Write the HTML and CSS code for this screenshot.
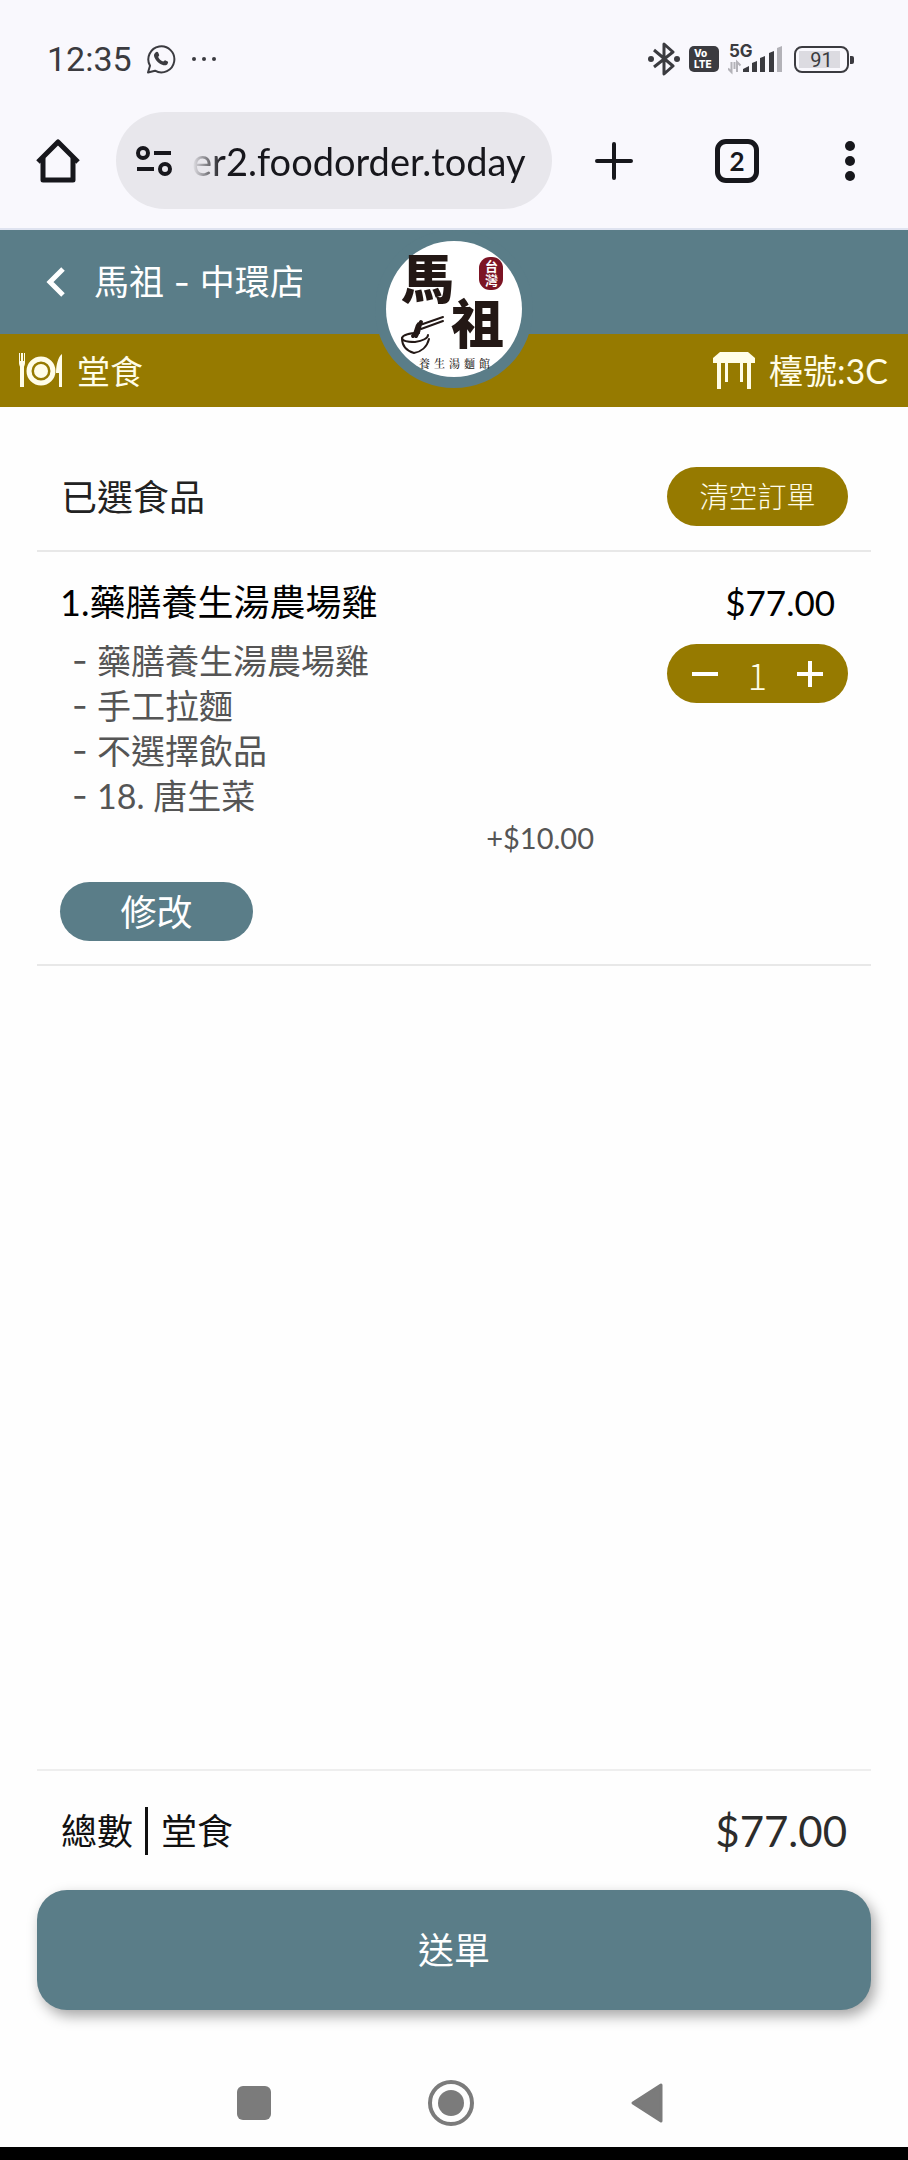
FILE: index.html
```html
<!DOCTYPE html>
<html lang="zh-Hant">
<head>
    <meta charset="UTF-8">
    <meta name="viewport" content="width=device-width, initial-scale=1.0">
    <title>馬祖 - 中環店</title>
    <link rel="stylesheet" href="styles.css">
</head>
<body>
    <div class="status-bar">
        <span class="clock">12:35</span>
        <svg class="icon-whatsapp" width="30" height="30" viewBox="0 0 30 30">
            <path d="M2 28.500l2-6.800A13 13 0 1 1 9 26.700z" fill="none" stroke="#3b3b40" stroke-width="2" stroke-linejoin="round"/>
            <path d="M9.500 8.500c1-1 2.300-.8 2.800.3l.9 2.200c.2.600-.9 1.500-1 2 .9 2 2.600 3.600 4.900 4.600.7 0 1.400-1.500 2-1.300l2.600 1.300c.8.500.3 2-.5 2.800-1.800 1.500-4.700 1-7.600-.9-2.300-1.500-4.200-3.700-5.200-6.200-.8-2-.3-3.700 1.100-4.800z" fill="#3b3b40"/>
        </svg>
        <svg class="icon-more" width="26" height="6" viewBox="0 0 26 6" fill="#3b3b40">
            <circle cx="3" cy="3" r="2"/><circle cx="13" cy="3" r="2"/><circle cx="23" cy="3" r="2"/>
        </svg>
        <div class="status-right">
            <svg width="32" height="34" viewBox="0 0 32 34" fill="none" stroke="#3b3b40" stroke-width="3">
                <path d="M6 8l19 16-9 8V2l9 8L6 25" stroke-linejoin="round"/>
                <circle cx="3" cy="17" r="3" fill="#3b3b40" stroke="none"/>
                <circle cx="29" cy="17" r="3" fill="#3b3b40" stroke="none"/>
            </svg>
            <span class="volte"><span>Vo</span><span>LTE</span></span>
            <svg class="signal" width="54" height="34" viewBox="0 0 54 34">
                <text x="1" y="15" class="signal-text">5G</text>
                <path d="M3.500 20v10L0 26.500M9 30V20l3.500 3.500M6.500 20v7" fill="none" stroke="#b3b2b8" stroke-width="2"/>
                <g fill="#3b3b40">
                    <path d="M15 30v-3l6-3v6zM24 30v-9l5-2v11zM32 30V16l5-2v16zM41 30V11l5-2v21z"/>
                </g>
                <path d="M49 30V6l5-2v26z" fill="#b3b2b8"/>
            </svg>
            <span class="battery">91</span>
        </div>
    </div>

    <div class="browser-bar">
        <button class="browser-btn" aria-label="Home">
            <svg width="44" height="46" viewBox="0 0 44 46" fill="none" stroke="#17171c" stroke-width="5" stroke-linejoin="round">
                <path d="M2 24L22 4l20 20"/>
                <path d="M7 20v22h30V20"/>
            </svg>
        </button>
        <div class="address">
            <svg width="36" height="32" viewBox="0 0 36 32" fill="none" stroke="#17171c" stroke-width="4">
                <circle cx="7" cy="8" r="5"/><path d="M18 8h17"/>
                <circle cx="29" cy="24" r="5"/><path d="M1 24h17"/>
            </svg>
            <span class="url">er2.foodorder.today</span>
        </div>
        <div class="browser-actions">
            <button class="browser-btn" aria-label="New tab">
                <svg width="38" height="38" viewBox="0 0 38 38" stroke="#17171c" stroke-width="4" stroke-linecap="round">
                    <path d="M2 19h34M19 2v34"/>
                </svg>
            </button>
            <button class="browser-btn tabs">2</button>
            <button class="browser-btn" aria-label="Menu">
                <svg width="18" height="40" viewBox="0 0 18 40" fill="#17171c">
                    <circle cx="9" cy="5" r="5"/><circle cx="9" cy="20" r="5"/><circle cx="9" cy="35" r="5"/>
                </svg>
            </button>
        </div>
    </div>

    <header class="shop-header">
        <div class="shop-title">
            <button class="back-btn" aria-label="Back">
                <svg width="20" height="30" viewBox="0 0 20 30" fill="none" stroke="#fff" stroke-width="5">
                    <path d="M17 2L4 15l13 13"/>
                </svg>
            </button>
            <h1 class="shop-name">馬祖 - 中環店</h1>
        </div>
        <div class="order-type">
            <span class="order-label">
                <svg width="44" height="36" viewBox="0 0 44 36" fill="#fffde8">
                    <path d="M0 0h1v8h1V0h2v8h1V0h1v10c0 2-1 3-1 4v20H1V14c0-1-1-2-1-4z"/>
                    <circle cx="22" cy="18" r="12" fill="none" stroke="#fffde8" stroke-width="5"/>
                    <circle cx="22" cy="18" r="7"/>
                    <path d="M43 1v33h-3V20h-3c0-8 2-16 6-19z"/>
                </svg>
                堂食
            </span>
            <span class="order-label">
                <svg width="42" height="38" viewBox="0 0 42 38" fill="#fffde8">
                    <path d="M7 0h28l7 6v5H0V6z"/>
                    <path d="M4 9h4v28H4zM12 9h3v21h-3zM27 9h3v21h-3zM34 9h4v28h-4z"/>
                </svg>
                檯號:3C
            </span>
        </div>
        <svg class="logo" width="158" height="158" viewBox="0 0 158 158">
            <circle cx="79" cy="79" r="79" fill="#5a7d88"/>
            <circle cx="79" cy="79" r="68" fill="#fff"/>
            <text class="logo-brush" x="26" y="69">馬</text>
            <text class="logo-brush" x="76" y="114">祖</text>
            <rect x="104" y="27" width="24" height="33" rx="11" fill="#7c1424"/>
            <text class="logo-seal" x="110" y="41">台</text>
            <text class="logo-seal" x="110" y="55">灣</text>
            <!-- noodle bowl -->
            <g fill="none" stroke="#231815" stroke-width="2" stroke-linecap="round">
                <path d="M44 103c-9 0-16 2-17 5 0 3 6 4 13 4 8-1 13-4 13-7"/>
                <path d="M27 108c0 8 5 13 12 15 7-1 13-6 15-14"/>
                <path d="M45 95l23-8M46 99l22-8"/>
                <path d="M46 92c-3 4 0 7-5 14M44 94c-4 4-1 8-6 12" stroke-width="4"/>
            </g>
            <text class="logo-sub" x="44 59 74 89 104" y="138">養生湯麵館</text>
        </svg>
    </header>

    <main class="cart">
        <div class="cart-head">
            <h2 class="cart-title">已選食品</h2>
            <button class="pill">清空訂單</button>
        </div>
        <div class="item">
            <div class="item-info">
                <h3 class="item-name">1.藥膳養生湯農場雞</h3>
                <ul class="options">
                    <li>藥膳養生湯農場雞</li>
                    <li>手工拉麵</li>
                    <li>不選擇飲品</li>
                    <li>18. 唐生菜</li>
                </ul>
                <div class="option-price">+$10.00</div>
                <button class="edit-btn">修改</button>
            </div>
            <div class="item-side">
                <div class="item-price">$77.00</div>
                <div class="pill stepper">
                    <button class="step-btn" aria-label="Decrease">
                        <svg width="26" height="26" viewBox="0 0 26 26" stroke="#fff" stroke-width="4"><path d="M0 13h26"/></svg>
                    </button>
                    <span class="qty">1</span>
                    <button class="step-btn" aria-label="Increase">
                        <svg width="26" height="26" viewBox="0 0 26 26" stroke="#fff" stroke-width="4"><path d="M0 13h26M13 0v26"/></svg>
                    </button>
                </div>
            </div>
        </div>
    </main>

    <footer class="checkout">
        <div class="total">
            <span class="total-label">總數</span>
            <span class="total-type">堂食</span>
            <span class="total-price">$77.00</span>
        </div>
        <button class="submit-btn">送單</button>
    </footer>

    <nav class="system-nav">
        <button class="nav-btn" aria-label="Recent">
            <svg width="34" height="34" viewBox="0 0 34 34"><rect width="34" height="34" rx="6" fill="#7b7b7b"/></svg>
        </button>
        <button class="nav-btn" aria-label="Home screen">
            <svg width="48" height="48" viewBox="0 0 48 48">
                <circle cx="24" cy="24" r="21" fill="none" stroke="#7b7b7b" stroke-width="4"/>
                <circle cx="24" cy="24" r="13" fill="#7b7b7b"/>
            </svg>
        </button>
        <button class="nav-btn" aria-label="Go back">
            <svg width="32" height="40" viewBox="0 0 32 40"><path d="M30 2v36L2 20z" fill="#7b7b7b" stroke="#7b7b7b" stroke-width="3" stroke-linejoin="round"/></svg>
        </button>
    </nav>
</body>
</html>
```

FILE: styles.css
```css
* {
    box-sizing: border-box;
}
body {
    margin: 0;
    min-height: 100vh;
    display: flex;
    flex-direction: column;
    background-color: #fefefe;
    font-family: Lato, "Noto Sans CJK TC", sans-serif;
    font-size: 36px;
    line-height: 48px;
    color: #222;
    border-bottom: 13px solid #000;
}
button {
    font: inherit;
    color: inherit;
    background: none;
    border: none;
    padding: 0;
    cursor: pointer;
}
svg {
    display: block;
    flex-shrink: 0;
}
h1, h2, h3, ul {
    margin: 0;
    padding: 0;
    font-size: inherit;
    font-weight: 400;
}

/* phone status bar */
.status-bar {
    display: flex;
    align-items: center;
    height: 112px;
    padding: 6px 59px 0 47px;
    background-color: #f9f8fd;
    color: #3b3b40;
}
.clock {
    font-family: Roboto, sans-serif;
    font-size: 34px;
}
.icon-whatsapp {
    margin-left: 14px;
}
.icon-more {
    margin-left: 15px;
}
.status-right {
    display: flex;
    align-items: center;
    gap: 9px;
    margin-left: auto;
}
.volte {
    display: flex;
    flex-direction: column;
    justify-content: center;
    width: 30px;
    height: 26px;
    padding-left: 5px;
    border-radius: 5px;
    background-color: #3b3b40;
    color: #fff;
    font-family: Inter, sans-serif;
    font-size: 10px;
    font-weight: 800;
    line-height: 11px;
}
.signal-text {
    font: 700 17px Inter, sans-serif;
    fill: #3b3b40;
}
.battery {
    position: relative;
    width: 55px;
    height: 27px;
    margin-left: 3px;
    border: 2px solid #3b3b40;
    border-radius: 8px;
    background: linear-gradient(to right, #dcdbe1 41px, transparent 41px) 3px 3px / 45px 17px no-repeat;
    font-family: Roboto, sans-serif;
    font-size: 20px;
    line-height: 24px;
    text-align: center;
}
.battery::after {
    content: "";
    position: absolute;
    top: 8px;
    right: -7px;
    width: 4px;
    height: 8px;
    border-radius: 0 2px 2px 0;
    background-color: #3b3b40;
}

/* browser toolbar */
.browser-bar {
    display: flex;
    align-items: center;
    padding: 0 49px 19px 36px;
    background-color: #f9f8fd;
    border-bottom: 2px solid #dfe3f0;
}
.address {
    flex: 0 1 436px;
    display: flex;
    align-items: center;
    gap: 20px;
    min-width: 0;
    height: 97px;
    margin-left: 36px;
    padding: 0 16px 0 20px;
    border-radius: 49px;
    background-color: #e8e7ec;
}
.url {
    flex: 1;
    overflow: hidden;
    white-space: nowrap;
    color: #17171c;
    font-size: 38px;
    -webkit-mask-image: linear-gradient(to right, transparent, #000 30px);
    mask-image: linear-gradient(to right, transparent, #000 30px);
}
.browser-actions {
    flex: 1;
    display: flex;
    align-items: center;
    justify-content: space-between;
    margin-left: 43px;
}
.tabs {
    width: 44px;
    height: 44px;
    border: 5px solid #17171c;
    border-radius: 11px;
    color: #17171c;
    font-size: 26px;
    font-weight: 700;
    line-height: 34px;
}

/* shop header */
.shop-header {
    position: relative;
    color: #fff;
}
.shop-title {
    display: flex;
    align-items: center;
    height: 104px;
    padding-left: 46px;
    background-color: #5a7d88;
}
.shop-name {
    width: 208px;
    margin-left: 28px;
    overflow: hidden;
    white-space: nowrap;
    font-family: Inter, "Noto Sans CJK TC", sans-serif;
    font-size: 35px;
}
.order-type {
    display: flex;
    align-items: center;
    justify-content: space-between;
    height: 73px;
    padding: 0 20px 0 19px;
    background-color: #967a00;
    color: #fffde8;
    font-size: 33px;
}
.order-label {
    display: flex;
    align-items: center;
    gap: 14px;
}
.order-label:last-child {
    font-size: 34px;
}
.logo {
    position: absolute;
    top: 0;
    left: 50%;
    margin-left: -79px;
}
.logo-brush {
    font: 900 53px "Noto Sans CJK TC", sans-serif;
    fill: #231815;
}
.logo-seal {
    font: 700 13px "Noto Sans CJK TC", sans-serif;
    fill: #fff;
}
.logo-sub {
    font: 500 11px "Noto Serif CJK TC", "Noto Sans CJK TC", serif;
    fill: #231815;
}

/* cart */
.cart {
    flex: 1;
    margin: 0 37px;
}
.cart-head {
    display: flex;
    align-items: center;
    justify-content: space-between;
    padding: 60px 23px 24px 24px;
    border-bottom: 2px solid #e8e8e8;
}
.pill {
    width: 181px;
    height: 59px;
    border-radius: 30px;
    background-color: #967a00;
    color: #fffde8;
    font-size: 29px;
    font-weight: 300;
}
.item {
    display: flex;
    justify-content: space-between;
    padding: 26px 23px 23px;
    border-bottom: 2px solid #e8e8e8;
}
.item-info {
    flex: 0 1 534px;
}
.item-name {
    color: #000;
}
.options {
    margin-top: 12px;
    list-style: none;
    color: #555;
    font-size: 34px;
    line-height: 45px;
}
.options li {
    display: flex;
    padding-left: 12px;
}
.options li::before {
    content: "-";
    width: 25px;
    font-family: Inter, sans-serif;
}
.option-price {
    color: #555;
    font-size: 29px;
    line-height: 40px;
    text-align: right;
}
.edit-btn {
    display: block;
    width: 193px;
    height: 59px;
    margin-top: 24px;
    border-radius: 30px;
    background-color: #5a7d88;
    color: #fff;
}
.item-side {
    display: flex;
    flex-direction: column;
    align-items: flex-end;
}
.item-price {
    padding-right: 13px;
    color: #000;
    font-size: 35px;
}
.stepper {
    display: flex;
    align-items: center;
    justify-content: space-between;
    margin-top: 18px;
    padding: 0 25px;
}
.qty {
    font-family: "Noto Sans CJK TC", sans-serif;
    font-size: 36px;
}

/* total and submit */
.checkout {
    margin: 0 37px;
    border-top: 2px solid #eee;
}
.total {
    display: flex;
    align-items: center;
    padding: 36px 24px 35px;
    color: #111;
}
.total-type {
    margin-left: 12px;
    padding-left: 13px;
    border-left: 3px solid #111;
}
.total-price {
    margin-left: auto;
    color: #2c2c2c;
    font-size: 42px;
}
.submit-btn {
    display: block;
    width: 100%;
    height: 120px;
    border-radius: 30px;
    background-color: #5a7d88;
    color: #fff;
    box-shadow: 4px 6px 14px rgba(0, 0, 0, 0.35);
}

/* phone navigation */
.system-nav {
    display: flex;
    align-items: center;
    justify-content: space-between;
    height: 137px;
    padding: 49px 245px 0 237px;
}
```
